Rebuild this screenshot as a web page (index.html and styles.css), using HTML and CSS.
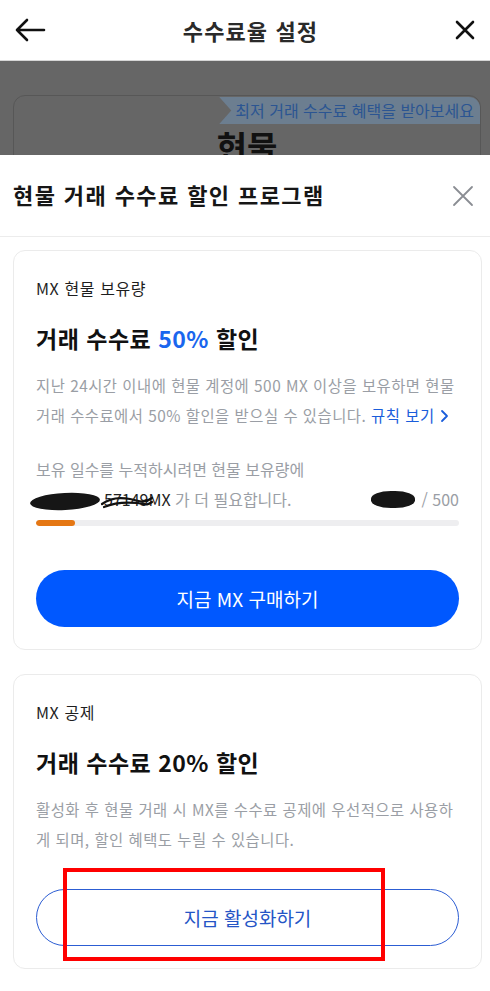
FILE: index.html
```html
<!DOCTYPE html>
<html lang="ko">
<head>
<meta charset="utf-8">
<link rel="stylesheet" href="styles.css">
</head>
<body>
<div class="screen">
  <header class="topbar">
    <svg class="icon-back" width="32" height="24" viewBox="0 0 32 24"><path d="M30 12H3M13 2L3 12l10 10" fill="none" stroke="#111" stroke-width="2.6" stroke-linecap="round" stroke-linejoin="round"/></svg>
    <h1 class="topbar-title">수수료율 설정</h1>
    <svg class="icon-close" width="20" height="20" viewBox="0 0 20 20"><path d="M2 2l16 16M18 2L2 18" stroke="#111" stroke-width="2.6" stroke-linecap="round"/></svg>
  </header>

  <div class="backdrop">
    <div class="under-card">
      <div class="under-tag-row"><span class="under-tag">최저 거래 수수료 혜택을 받아보세요</span></div>
      <div class="under-title">현물</div>
    </div>
  </div>

  <section class="sheet">
    <div class="sheet-head">
      <h2 class="sheet-title">현물 거래 수수료 할인 프로그램</h2>
      <svg class="sheet-close" width="22" height="22" viewBox="0 0 22 22"><path d="M2 2l18 18M20 2L2 20" stroke="#8a8d93" stroke-width="1.8" stroke-linecap="round"/></svg>
    </div>

    <div class="cards">
      <article class="card">
        <div class="card-label">MX 현물 보유량</div>
        <div class="card-headline">거래 수수료 <span class="accent">50%</span> 할인</div>
        <p class="card-desc keep">지난 24시간 이내에 현물 계정에 500 MX 이상을 보유하면 현물 거래 수수료에서 50% 할인을 받으실 수 있습니다. <span class="link">규칙 보기<svg class="chev" width="14" height="14" viewBox="0 0 14 14"><path d="M7 2l5 5-5 5" fill="none" stroke="#1a5ddb" stroke-width="1.8" stroke-linecap="round" stroke-linejoin="round"/></svg></span></p>
        <div class="progress-text">
          <div>보유 일수를 누적하시려면 현물 보유량에</div>
          <div class="progress-row">
            <span class="need"><span class="redact redact-a"></span><span class="num">57149MX<svg class="scribble" width="54" height="18" viewBox="0 0 54 18"><path d="M2 11C10 5 20 4 30 6S44 11 52 5M4 14C14 10 26 9 36 10S46 13 52 9" fill="none" stroke="#111" stroke-width="2.2" stroke-linecap="round"/></svg></span> 가 더 필요합니다.</span>
            <span class="count"><span class="redact redact-b"></span> / 500</span>
          </div>
        </div>
        <div class="bar"><div class="bar-fill" style="width:9.2%"></div></div>
        <button class="btn btn-primary">지금 MX 구매하기</button>
      </article>

      <article class="card">
        <div class="card-label">MX 공제</div>
        <div class="card-headline">거래 수수료 20% 할인</div>
        <p class="card-desc">활성화 후 현물 거래 시 MX를 수수료 공제에 우선적으로 사용하게 되며, 할인 혜택도 누릴 수 있습니다.</p>
        <div class="btn-wrap">
          <button class="btn btn-outline">지금 활성화하기</button>
          <div class="annotation"></div>
        </div>
      </article>
    </div>
  </section>
</div>
</body>
</html>
```

FILE: styles.css
```css
* { box-sizing: border-box; }
html, body { margin: 0; padding: 0; background: #fff; }
body {
  font-family: "Noto Sans CJK KR", "Noto Sans", sans-serif;
  color: #1b1b1b;
  width: 490px;
  overflow: hidden;
}
.screen { width: 490px; }

.topbar {
  height: 61px;
  display: flex;
  align-items: center;
  justify-content: space-between;
  padding: 0 15px 0 14px;
  border-bottom: 1px solid #d6d6d6;
  background: #fff;
}
.topbar-title {
  margin: 0;
  font-size: 22px;
  font-weight: 700;
  color: #2a2a2a;
  letter-spacing: 1.1px;
}

.backdrop {
  height: 94px;
  background: #666;
  overflow: hidden;
  padding: 34px 9px 0 13px;
}
.under-card {
  border: 1px solid #575757;
  border-radius: 12px;
  height: 120px;
}
.under-tag-row { display: flex; justify-content: flex-end; padding-top: 1px; }
.under-tag {
  background: #6c7e90;
  color: #2b5592;
  font-size: 16px;
  line-height: 27px;
  padding: 0 6px 0 16px;
  border-top-right-radius: 11px;
  clip-path: polygon(0 0, 100% 0, 100% 100%, 0 100%, 12px 50%);
}
.under-title {
  text-align: center;
  font-size: 33px;
  font-weight: 700;
  color: #111;
  line-height: 40px;
  margin-top: 2px;
}

.sheet { background: #fff; }
.sheet-head {
  height: 82px;
  display: flex;
  align-items: center;
  justify-content: space-between;
  padding: 0 16px 0 13px;
  border-bottom: 1px solid #ececec;
}
.sheet-title {
  margin: 0 0 4px;
  font-size: 22px;
  font-weight: 700;
  color: #161616;
  letter-spacing: 1.4px;
}

.cards {
  padding: 13px 8px 0 13px;
  display: flex;
  flex-direction: column;
  gap: 24px;
}
.card {
  border: 1px solid #ebebeb;
  border-radius: 12px;
  padding: 25px 22px 22px 22px;
  background: #fff;
}
.card-label {
  font-size: 16px;
  line-height: 24px;
  color: #1e1e1e;
  letter-spacing: 0.6px;
}
.card-headline {
  margin-top: 22px;
  font-size: 23px;
  line-height: 32px;
  font-weight: 700;
  color: #111;
  letter-spacing: 0.5px;
}
.accent { color: #1a66ee; }
.card-desc {
  margin: 16px 0 0;
  font-size: 15.4px;
  line-height: 30px;
  color: #9a9ea5;
  letter-spacing: 0.5px;
}
.keep { word-break: keep-all; }
.link { color: #1a5ddb; white-space: nowrap; }
.chev { vertical-align: -1px; }

.progress-text {
  margin-top: 24px;
  font-size: 16px;
  line-height: 30px;
  color: #9a9ea5;
}
.progress-row { display: flex; justify-content: space-between; align-items: center; }
.need { white-space: pre; }
.num { color: #222; position: relative; }
.scribble { position: absolute; left: -4px; top: 6px; }
.redact { display: inline-block; vertical-align: middle; background: #161616; border-radius: 50%; height: 17px; }
.redact-a { width: 70px; margin-left: -6px; margin-right: 4px; transform: rotate(-3deg); }
.redact-b { width: 44px; margin-right: 2px; border-radius: 45%; }
.count { display: flex; align-items: center; white-space: pre; }

.bar {
  margin-top: 6px;
  height: 6px;
  border-radius: 3px;
  background: #eeeef0;
  overflow: hidden;
}
.bar-fill { height: 100%; background: #e57714; border-radius: 3px; }

.btn {
  display: block;
  width: 100%;
  height: 57px;
  border-radius: 29px;
  font-family: inherit;
  font-size: 19px;
  cursor: pointer;
}
.btn-primary {
  margin-top: 44px;
  background: #0058ff;
  border: none;
  color: #fff;
}
.btn-wrap { position: relative; margin-top: 35px; }
.btn-outline {
  background: #fff;
  border: 1.5px solid #2c5dd3;
  color: #2555c6;
}
.annotation {
  position: absolute;
  left: 27px;
  top: -21px;
  width: 322px;
  height: 93px;
  border: 4px solid #ff0000;
  pointer-events: none;
}
```
